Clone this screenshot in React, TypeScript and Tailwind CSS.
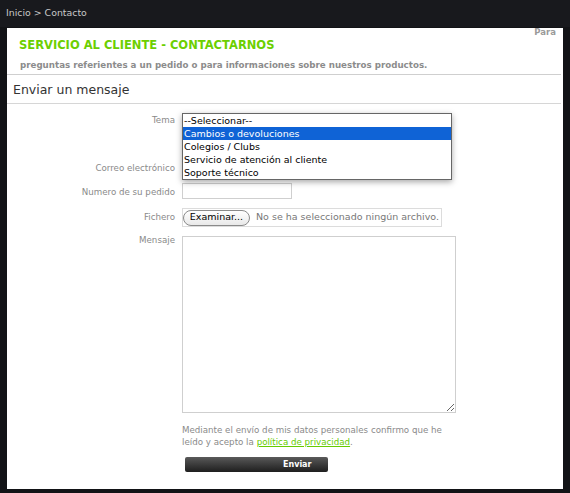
const font = "font-['DejaVu_Sans','Verdana',sans-serif]";

const opciones = [
  'Cambios o devoluciones',
  'Colegios / Clubs',
  'Servicio de atención al cliente',
  'Soporte técnico',
];

const Etiqueta = ({ children, pt }: { children: React.ReactNode; pt: string }) => (
  <div className={`w-[175px] shrink-0 pr-[7px] text-right text-[8.7px] leading-[12px] text-[#8a8a8a] ${pt}`}>
    {children}
  </div>
);

export default function App() {
  return (
    <div className={`${font} h-[493px] w-[570px] overflow-hidden bg-[#121316]`}>
      <div className="flex h-[27px] items-center bg-[#18191d] pl-[6px] text-[9.4px] text-[#c8c8c8]">
        Inicio &gt; Contacto
      </div>

      <div className="ml-[7px] h-[461px] w-[556px] bg-white">
        <div className="mt-[1px] h-[9px] pr-[7px] text-right text-[8.5px] font-bold leading-[9px] text-[#9a9a9a]">
          Para
        </div>
        <h1 className="ml-[12px] text-[11.5px] font-bold leading-[16px] text-[#6ccf00]">
          SERVICIO AL CLIENTE - CONTACTARNOS
        </h1>
        <p className="ml-[13px] mt-[6px] text-[8.7px] font-bold leading-[12px] text-[#8c8c8c]">
          preguntas referientes a un pedido o para informaciones sobre nuestros productos.
        </p>
        <div className="mr-[2px] mt-[3px] border-t border-[#cfcfcf]" />
        <h2 className="h-[28px] pl-[6px] pt-[7px] text-[12.5px] leading-[16px] text-[#333]">Enviar un mensaje</h2>
        <div className="mr-[2px] border-t border-[#d6d6d6]" />

        <form className="pt-[9px]" onSubmit={(e) => e.preventDefault()}>
          {/* Tema */}
          <div className="flex h-[47px]">
            <Etiqueta pt="pt-[1px]">Tema</Etiqueta>
            <div className="relative">
              <div className="absolute left-0 top-0 z-10 w-[270px] border border-[#666] bg-white text-[9.5px] leading-[13px] text-black shadow-[0_2px_6px_rgba(0,0,0,0.35)]">
                <div className="px-[1px]">--Seleccionar--</div>
                {opciones.map((o, i) => (
                  <div key={o} className={`px-[1px] ${i === 0 ? 'bg-[#0f63d6] text-white' : ''}`}>
                    {o}
                  </div>
                ))}
              </div>
            </div>
          </div>

          {/* Correo */}
          <div className="flex h-[23px]">
            <Etiqueta pt="pt-[2px]">Correo electrónico</Etiqueta>
            <input className="h-[16px] w-[270px] border border-[#cfcfcf] outline-none" />
          </div>

          {/* Numero */}
          <div className="flex h-[25px]">
            <Etiqueta pt="pt-[3px]">Numero de su pedido</Etiqueta>
            <input className="h-[16px] w-[110px] border border-[#cfcfcf] outline-none" />
          </div>

          {/* Fichero */}
          <div className="flex h-[26px]">
            <Etiqueta pt="pt-[2.5px]">Fichero</Etiqueta>
            <div className="flex h-[19px] w-[260px] items-center border border-[#dcdcdc] text-[9.5px]">
              <span className="flex h-[16px] w-[67px] items-center justify-center rounded-full border border-[#8a8a8a] bg-gradient-to-b from-white to-[#e9e9e9] text-black">
                Examinar...
              </span>
              <span className="ml-[6px] text-[#777]">No se ha seleccionado ningún archivo.</span>
            </div>
          </div>

          {/* Mensaje */}
          <div className="flex">
            <Etiqueta pt="pt-0">Mensaje</Etiqueta>
            <div className="flex flex-col">
              <textarea className="mt-[2px] h-[177px] w-[274px] resize border border-[#cfcfcf] outline-none" />
              <p className="mt-[11px] w-[280px] text-[8.7px] leading-[12px] text-[#8a8a8a]">
                Mediante el envío de mis datos personales confirmo que he
                <br />
                leído y acepto la{' '}
                <a href="#" className="whitespace-nowrap text-[#66cc00] underline">
                  política de privacidad
                </a>
                .
              </p>
              <button
                type="submit"
                className="ml-[3px] mt-[9px] flex h-[15px] w-[143px] items-center rounded-[2px] bg-gradient-to-b from-[#5a5a5a] to-[#1f1f1f] pl-[98px] text-[8px] font-bold text-white"
              >
                Enviar
              </button>
            </div>
          </div>
        </form>
      </div>
    </div>
  );
}
